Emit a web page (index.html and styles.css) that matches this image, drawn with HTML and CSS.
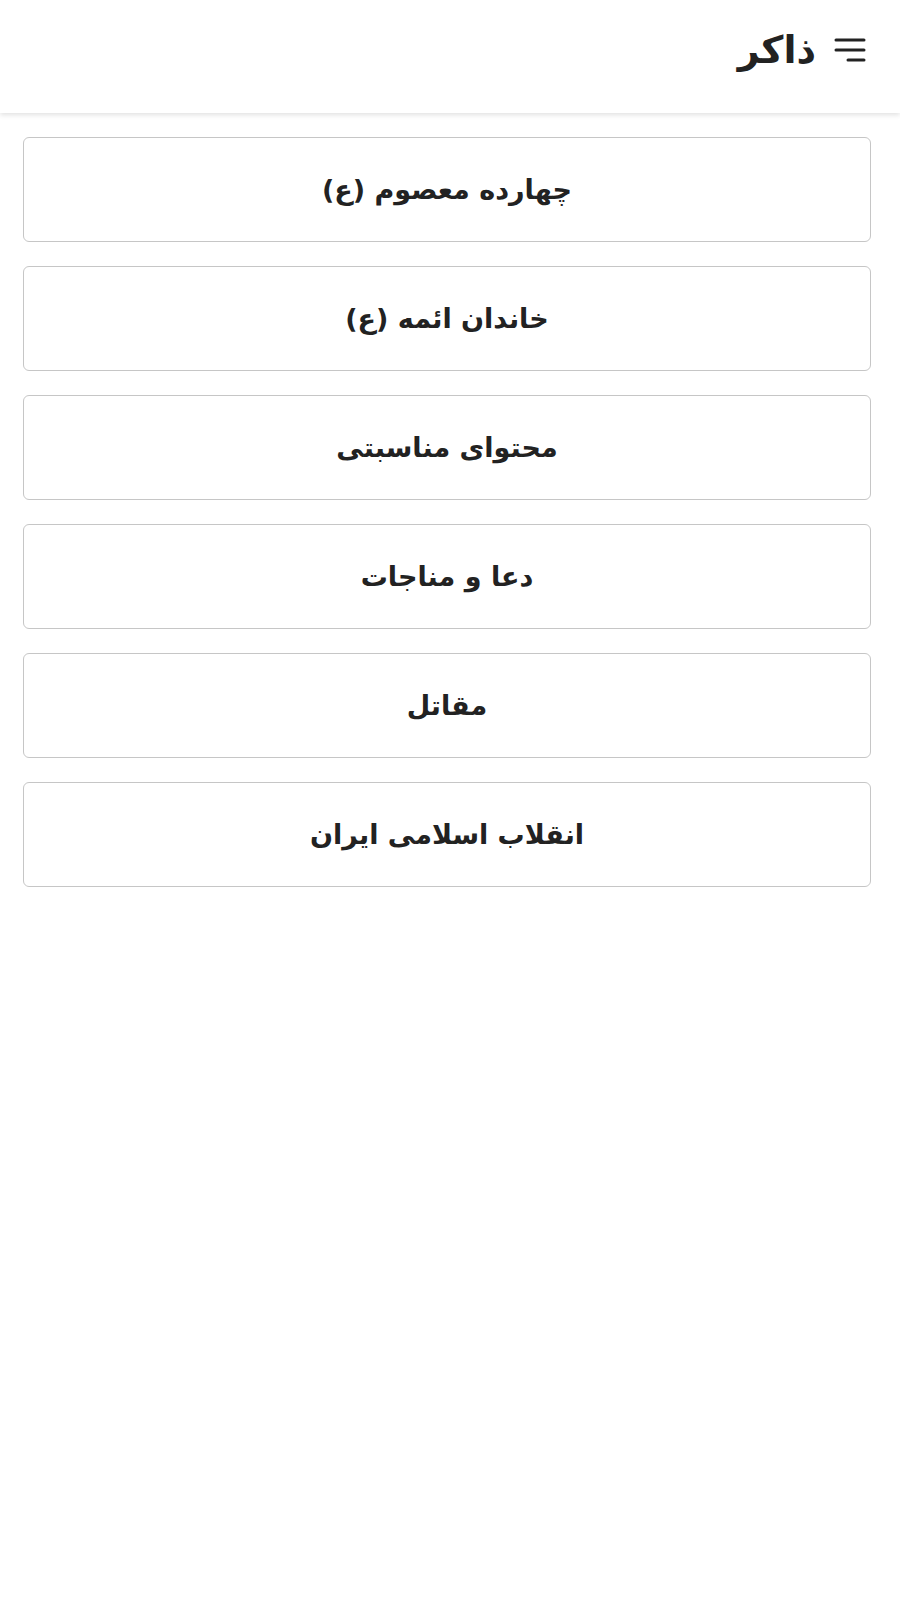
FILE: index.html
```html
<!DOCTYPE html>
<html lang="fa" dir="rtl">
<head>
<meta charset="utf-8">
<title>ذاکر</title>
<link rel="stylesheet" href="styles.css">
</head>
<body>
<header class="topbar">
  <button class="menu-btn" aria-label="منو">
    <svg width="32" height="26" viewBox="0 0 32 26"><path d="M2 3H30M2 13H30M14 23H30" stroke="#222" stroke-width="3" stroke-linecap="round" fill="none"/></svg>
  </button>
  <h1 class="title">ذاکر</h1>
</header>
<main class="list">
  <a class="item" href="#">چهارده معصوم (ع)</a>
  <a class="item" href="#">خاندان ائمه (ع)</a>
  <a class="item" href="#">محتوای مناسبتی</a>
  <a class="item" href="#">دعا و مناجات</a>
  <a class="item" href="#">مقاتل</a>
  <a class="item" href="#">انقلاب اسلامی ایران</a>
</main>
</body>
</html>
```
FILE: styles.css
```css
html, body {
  margin: 0;
  padding: 0;
  background: #fff;
  font-family: "DejaVu Sans", "Noto Sans", sans-serif;
  color: #222;
}
.topbar {
  height: 113px;
  display: flex;
  align-items: center;
  gap: 18px;
  padding: 0 34px 0 0;
  box-shadow: 0 2px 5px rgba(0,0,0,0.12);
  background: #fff;
}
.menu-btn {
  background: none;
  border: 0;
  padding: 0;
  display: flex;
  margin-top: -14px;
}
.title {
  margin: 0;
  font-size: 38px;
  font-weight: bold;
  margin-top: -14px;
}
.list {
  display: flex;
  flex-direction: column;
  gap: 24px;
  padding: 24px 29px 0 23px;
}
.item {
  height: 103px;
  border: 1px solid #c6c6c6;
  border-radius: 6px;
  display: flex;
  align-items: center;
  justify-content: center;
  font-size: 27px;
  font-weight: bold;
  color: #222;
  text-decoration: none;
}
```
